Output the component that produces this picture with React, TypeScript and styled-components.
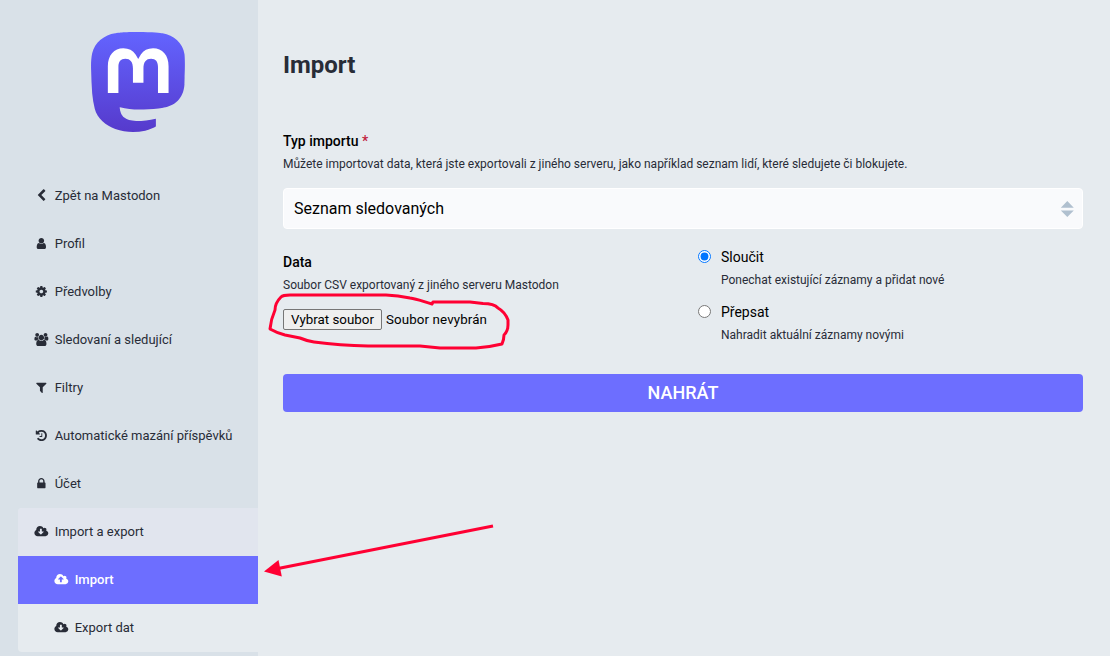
import React from "react";
import styled, { createGlobalStyle } from "styled-components";

const GlobalStyle = createGlobalStyle`
  * { box-sizing: border-box; }
  body {
    margin: 0;
    background: #e6ebef;
    color: #282c37;
    font-family: Roboto, "Liberation Sans", sans-serif;
    font-size: 13px;
    line-height: 18px;
    overflow: hidden;
  }
`;

const Page = styled.div`
  position: relative;
  display: flex;
  height: 656px;
`;

const Sidebar = styled.aside`
  width: 258px;
  padding: 32px 0 4px 18px;
  background: #d9e1e8;
  display: flex;
  flex-direction: column;
`;

const LogoLink = styled.a`
  display: flex;
  justify-content: center;
  height: 100px;
  margin-bottom: 40px;
`;

const Nav = styled.nav`
  display: flex;
  flex-direction: column;
`;

const Group = styled.div`
  border-radius: 4px 0 0 4px;
  overflow: hidden;
  background: #e6ebef;
`;

const NavItem = styled.a<{ $state?: "open" | "active"; $nested?: boolean }>`
  display: flex;
  align-items: center;
  gap: 5px;
  height: 48px;
  padding-left: ${(p) => (p.$nested ? 35 : 15)}px;
  background: ${(p) =>
    p.$state === "active" ? "#6d6eff" : p.$state === "open" ? "#e1e5ee" : "transparent"};
  color: ${(p) => (p.$state === "active" ? "#fff" : "#282c37")};
  font-weight: ${(p) => (p.$state === "active" ? 500 : 400)};
  text-decoration: none;
  white-space: nowrap;
`;

const Glyph = styled.svg`
  width: 16.7px;
  height: 13px;
  margin-bottom: 2px;
  flex: none;
  fill: currentColor;
`;

const Content = styled.main`
  width: 825px;
  padding: 45px 0 0 25px;
`;

const Title = styled.h2`
  margin: 0 0 47px;
  font-size: 24px;
  line-height: 40px;
  font-weight: 700;
`;

const Label = styled.label`
  display: block;
  margin-bottom: 5px;
  font-size: 14px;
  font-weight: 500;
  line-height: 18px;
  color: #000;
`;

const Required = styled.abbr`
  color: #c1203b;
`;

const Hint = styled.span`
  display: block;
  font-size: 12px;
  line-height: 18px;
  color: #282c37;
`;

const Select = styled.div`
  display: flex;
  align-items: center;
  justify-content: space-between;
  height: 41px;
  margin: 15px 0 20px;
  padding: 0 8px 0 10px;
  border: 1px solid #fff;
  border-radius: 4px;
  background: #f9fafc;
  color: #000;
  font-size: 16px;
`;

const Columns = styled.div`
  display: grid;
  grid-template-columns: 415px 1fr;
  height: 125px;
`;

const FileColumn = styled.div`
  padding-top: 4px;
`;

const FileRow = styled.div`
  display: flex;
  align-items: center;
  gap: 4px;
  margin-top: 15px;
  color: #000;
  font-size: 13.333px;
`;

const FileName = styled.span`
  letter-spacing: 0.12px;
`;

const FileButton = styled.button`
  width: 99px;
  height: 21px;
  padding: 0;
  border: 1px solid #767676;
  border-radius: 2px;
  background: #efefef;
  color: #000;
  font: inherit;
  white-space: nowrap;
`;

const Option = styled.label`
  display: grid;
  grid-template-columns: 13px 1fr;
  column-gap: 10px;
  height: 55px;
  color: #000;
  font-size: 14px;
  line-height: 18px;
`;

const Radio = styled.input`
  width: 13px;
  height: 13px;
  margin: 1px 0 0;
`;

const OptionText = styled.div`
  display: flex;
  flex-direction: column;
  gap: 5px;
  margin-top: -1px;
`;

const Submit = styled.button`
  display: block;
  width: 800px;
  height: 38px;
  border: 0;
  border-radius: 4px;
  background: #6d6eff;
  color: #fff;
  font: 500 18px/38px Roboto, sans-serif;
  padding: 0;
`;

const Annotations = styled.svg`
  position: absolute;
  inset: 0;
  pointer-events: none;
`;

const icons = {
  back: "M1427 301l-531 531 531 531q19 19 19 45t-19 45l-166 166q-19 19-45 19t-45-19l-742-742q-19-19-19-45t19-45l742-742q19-19 45-19t45 19l166 166q19 19 19 45t-19 45z",
  user: "M1536 1399q0 109-62.5 187t-150.5 78h-854q-88 0-150.5-78t-62.5-187q0-85 8.5-160.5t31.5-152 58.5-131 94-89 134.5-34.5q131 128 313 128t313-128q76 0 134.5 34.5t94 89 58.5 131 31.5 152 8.5 160.5zm-256-887q0 159-112.5 271.5t-271.5 112.5-271.5-112.5-112.5-271.5 112.5-271.5 271.5-112.5 271.5 112.5 112.5 271.5z",
  cog: "M1152 896q0-106-75-181t-181-75-181 75-75 181 75 181 181 75 181-75 75-181zm512-109v222q0 12-8 23t-20 13l-185 28q-19 54-39 91 35 50 107 138 10 12 10 25t-9 23q-27 37-99 108t-94 71q-12 0-26-9l-138-108q-44 23-91 38-16 136-29 186-7 28-36 28h-222q-14 0-24.5-8.5t-11.5-21.5l-28-184q-49-16-90-37l-141 107q-10 9-25 9-14 0-25-11-126-114-165-168-7-10-7-23 0-12 8-23 15-21 51-66.5t54-70.5q-27-50-41-99l-183-27q-13-2-21-12.5t-8-23.5v-222q0-12 8-23t19-13l186-28q14-46 39-92-40-57-107-138-10-12-10-24 0-10 9-23 26-36 98.5-107.5t94.5-71.5q13 0 26 10l138 107q44-23 91-38 16-136 29-186 7-28 36-28h222q14 0 24.5 8.5t11.5 21.5l28 184q49 16 90 37l142-107q9-9 24-9 13 0 25 10 129 119 165 170 7 8 7 22 0 12-8 23-15 21-51 66.5t-54 70.5q26 50 41 98l183 28q13 2 21 12.5t8 23.5z",
  users: "M529 896q-162 5-265 128h-134q-82 0-138-40.5t-56-118.5q0-353 124-353 6 0 43.5 21t97.5 42.5 119 21.5q67 0 133-23-5 37-5 66 0 159 93 293zm1071 637q0 120-73 189.5t-194 69.5h-874q-121 0-194-69.5t-73-189.5q0-53 3.5-103.5t14-109 26.5-108.5 43-97.5 62-81 85.5-53.5 111.5-20q10 0 43 21.5t73 48 107 48 135 21.5 135-21.5 107-48 73-48 43-21.5q61 0 111.5 20t85.5 53.5 62 81 43 97.5 26.5 108.5 14 109 3.5 103.5zm-1024-1277q0 106-75 181t-181 75-181-75-75-181 75-181 181-75 181 75 75 181zm704 384q0 159-112.5 271.5t-271.5 112.5-271.5-112.5-112.5-271.5 112.5-271.5 271.5-112.5 271.5 112.5 112.5 271.5zm576 225q0 78-56 118.5t-138 40.5h-134q-103-123-265-128 93-134 93-293 0-29-5-66 66 23 133 23 59 0 119-21.5t97.5-42.5 43.5-21q124 0 124 353zm-128-609q0 106-75 181t-181 75-181-75-75-181 75-181 181-75 181 75 75 181z",
  filter: "M1595 295q17 41-14 70l-493 493v742q0 42-39 59-13 5-25 5-27 0-45-19l-256-256q-19-19-19-45v-486l-493-493q-31-29-14-70 17-39 59-39h1280q42 0 59 39z",
  history: "M1664 896q0 156-61 298t-164 245-245 164-298 61q-172 0-327-72.5t-264-204.5q-7-10-6.5-22.5t8.5-20.5l137-138q10-9 25-9 16 2 23 12 73 95 179 147t225 52q104 0 198.5-40.5t163.5-109.5 109.5-163.5 40.5-198.5-40.5-198.5-109.5-163.5-163.5-109.5-198.5-40.5q-98 0-188 35.5t-160 101.5l137 138q31 30 14 69-17 40-59 40h-448q-26 0-45-19t-19-45v-448q0-42 40-59 39-17 69 14l130 129q107-101 244.5-156.5t284.5-55.5q156 0 298 61t245 164 164 245 61 298zm-640-288v448q0 14-9 23t-23 9h-320q-14 0-23-9t-9-23v-64q0-14 9-23t23-9h224v-352q0-14 9-23t23-9h64q14 0 23 9t9 23z",
  lock: "M640 768h512v-192q0-106-75-181t-181-75-181 75-75 181v192zm832 96v576q0 40-28 68t-68 28h-960q-40 0-68-28t-28-68v-576q0-40 28-68t68-28h32v-192q0-184 132-316t316-132 316 132 132 316v192h32q40 0 68 28t28 68z",
  download: "M1280 800q0-14-9-23t-23-9h-224v-352q0-13-9.5-22.5t-22.5-9.5h-192q-13 0-22.5 9.5t-9.5 22.5v352h-224q-13 0-22.5 9.5t-9.5 22.5q0 14 9 23l352 352q9 9 23 9t23-9l351-351q10-12 10-24zm640 224q0 159-112.5 271.5t-271.5 112.5h-1088q-185 0-316.5-131.5t-131.5-316.5q0-130 70-240t188-165q-2-30-2-43 0-212 150-362t362-150q156 0 285.5 87t188.5 231q71-62 166-62 106 0 181 75t75 181q0 76-41 138 130 31 213.5 135.5t83.5 238.5z",
  upload: "M1280 736q0-14-9-23l-352-352q-9-9-23-9t-23 9l-351 351q-10 12-10 24 0 14 9 23t23 9h224v352q0 13 9.5 22.5t22.5 9.5h192q13 0 22.5-9.5t9.5-22.5v-352h224q13 0 22.5-9.5t9.5-22.5zm640 288q0 159-112.5 271.5t-271.5 112.5h-1088q-185 0-316.5-131.5t-131.5-316.5q0-130 70-240t188-165q-2-30-2-43 0-212 150-362t362-150q156 0 285.5 87t188.5 231q71-62 166-62 106 0 181 75t75 181q0 76-41 138 130 31 213.5 135.5t83.5 238.5z",
};

const viewBoxes: Partial<Record<keyof typeof icons, string>> = {
  download: "64 -128 1792 1792",
  upload: "64 -128 1792 1792",
};

const Icon = ({ name }: { name: keyof typeof icons }) => (
  <Glyph viewBox={viewBoxes[name] ?? "0 0 1792 1792"} overflow="visible">
    <path d={icons[name]} />
  </Glyph>
);

const menu: { icon: keyof typeof icons; text: string }[] = [
  { icon: "back", text: "Zpět na Mastodon" },
  { icon: "user", text: "Profil" },
  { icon: "cog", text: "Předvolby" },
  { icon: "users", text: "Sledovaní a sledující" },
  { icon: "filter", text: "Filtry" },
  { icon: "history", text: "Automatické mazání příspěvků" },
  { icon: "lock", text: "Účet" },
];

const Logo = () => (
  <svg width="95" height="100" viewBox="0 0 75 79">
    <defs>
      <linearGradient id="logo" x1="0" y1="0" x2="0" y2="1">
        <stop stopColor="#6364ff" />
        <stop offset="1" stopColor="#563acc" />
      </linearGradient>
    </defs>
    <path
      fill="url(#logo)"
      d="M73.8393 17.4898C72.6973 9.00165 65.2994 2.31235 56.5296 1.01614C55.05 0.797115 49.4441 0 36.4582 0H36.3612C23.3717 0 20.585 0.797115 19.1054 1.01614C10.5798 2.27644 2.79399 8.28712 0.904997 16.8758C-0.00358524 21.1056 -0.100549 25.7949 0.0682394 30.0965C0.308852 36.2651 0.355538 42.423 0.91577 48.5665C1.30307 52.6474 1.97872 56.6957 2.93763 60.6812C4.73325 68.042 12.0019 74.1676 19.1233 76.6666C26.7478 79.2728 34.9474 79.7055 42.8039 77.9162C43.6682 77.7151 44.5217 77.4817 45.3645 77.216C47.275 76.6092 49.5123 75.9305 51.1571 74.7385L51.2325 74.5948V68.6416L51.0171 68.4729C45.9835 69.675 40.8254 70.2777 35.6502 70.2682C26.7439 70.2682 24.3486 66.042 23.6626 64.2826C23.1113 62.762 22.7612 61.1759 22.6212 59.5646L22.8367 59.3886C27.7864 60.5826 32.8604 61.1853 37.9522 61.1839C39.1768 61.1839 40.3978 61.1839 41.6224 61.1516C46.7435 61.008 52.1411 60.7459 57.1796 59.7621C57.3053 59.7369 57.431 59.7154 57.5387 59.6831C65.4861 58.157 73.0493 53.3672 73.8178 41.2381C73.8465 40.7606 73.9184 36.2364 73.9184 35.7409C73.9219 34.0569 74.4606 23.7949 73.8393 17.4898Z"
    />
    <path
      fill="#fff"
      d="M61.2484 27.0263V48.114H52.8916V27.6475C52.8916 23.3388 51.096 21.1413 47.4437 21.1413C43.4287 21.1413 41.4174 23.7409 41.4174 28.8755V40.0782H33.1111V28.8755C33.1111 23.7409 31.0962 21.1413 27.0812 21.1413C23.4504 21.1413 21.6369 23.3388 21.6369 27.6475V48.114H13.2836V27.0263C13.2836 22.7176 14.384 19.2946 16.5849 16.7572C18.8542 14.2258 21.8311 12.926 25.5264 12.926C29.8036 12.926 33.0357 14.5705 35.1905 17.8559L37.2698 21.346L39.3527 17.8559C41.5074 14.5705 44.7395 12.926 49.0095 12.926C52.7013 12.926 55.6782 14.2258 57.9546 16.7572C60.1531 19.2922 61.2508 22.7152 61.2484 27.0263Z"
    />
  </svg>
);

export default function App() {
  return (
    <Page>
      <GlobalStyle />
      <Sidebar>
        <LogoLink>
          <Logo />
        </LogoLink>
        <Nav>
          {menu.map((m) => (
            <NavItem key={m.text}>
              <Icon name={m.icon} />
              {m.text}
            </NavItem>
          ))}
          <Group>
            <NavItem $state="open">
              <Icon name="download" />
              Import a export
            </NavItem>
            <NavItem $state="active" $nested>
              <Icon name="upload" />
              Import
            </NavItem>
            <NavItem $nested>
              <Icon name="download" />
              Export dat
            </NavItem>
          </Group>
        </Nav>
      </Sidebar>
      <Content>
        <Title>Import</Title>
        <Label>
          Typ importu <Required>*</Required>
        </Label>
        <Hint>
          Můžete importovat data, která jste exportovali z jiného serveru, jako například seznam lidí, které sledujete či blokujete.
        </Hint>
        <Select>
          Seznam sledovaných
          <svg width="14" height="16" viewBox="0 0 14 16" fill="#b0c0cf">
            <path d="M.8 6.700 7.300 0l6.500 6.700zM.8 9.500h13L7.300 16z" />
          </svg>
        </Select>
        <Columns>
          <FileColumn>
            <Label>Data</Label>
            <Hint>Soubor CSV exportovaný z jiného serveru Mastodon</Hint>
            <FileRow>
              <FileButton>Vybrat soubor</FileButton>
              <FileName>Soubor nevybrán</FileName>
            </FileRow>
          </FileColumn>
          <div>
            <Option>
              <Radio type="radio" name="mode" defaultChecked />
              <OptionText>
                Sloučit
                <Hint>Ponechat existující záznamy a přidat nové</Hint>
              </OptionText>
            </Option>
            <Option>
              <Radio type="radio" name="mode" />
              <OptionText>
                Přepsat
                <Hint>Nahradit aktuální záznamy novými</Hint>
              </OptionText>
            </Option>
          </div>
        </Columns>
        <Submit>NAHRÁT</Submit>
      </Content>
      <Annotations width="1110" height="656" fill="none" stroke="#ff0033" strokeWidth="3" strokeLinejoin="round">
        <path d="M432 304C424 302 418 299 410 298Q398 295.500 386 295H290Q283 295 281 297Q275 303 275 310Q271 319 270 329Q277 333 285 335L300 338Q307 341 314 342Q340 345.500 368 346H420L440 348H476Q490 347 502 344Q504 339 504 335Q508 331 508 325V320Q505 312 498 308Q494 303.500 483 303.500L470 302H433Z" />
        <path d="M493 526 278 568.500" />
        <path d="M264 571.500 278.500 560 281.800 576.500z" fill="#ff0033" stroke="none" />
      </Annotations>
    </Page>
  );
}
